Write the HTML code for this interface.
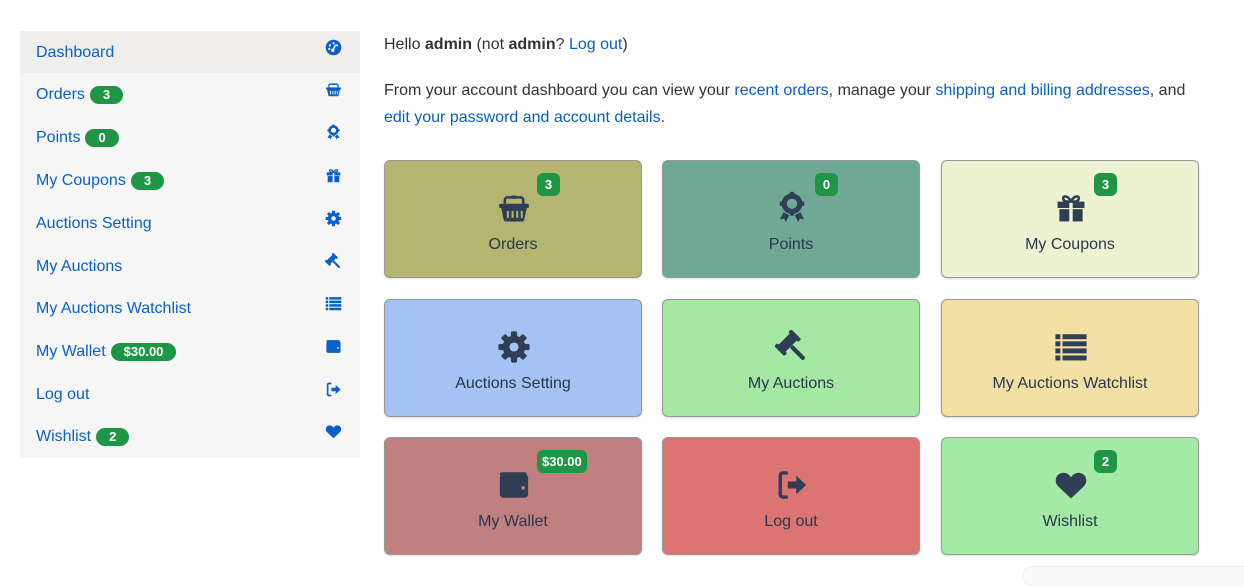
<!DOCTYPE html>
<html><head><meta charset="utf-8"><style>
*{box-sizing:border-box;margin:0;padding:0}
body{width:1244px;height:574px;background:#fff;font-family:"Liberation Sans",sans-serif;color:#333;position:relative;overflow:hidden}
a{color:#0a5fc9;text-decoration:none}
.side{position:absolute;left:20px;top:31px;width:340px;height:427px;background:#f6f6f6}
.row{position:absolute;left:0;width:340px;height:42px;display:flex;align-items:center;padding-left:16px;padding-top:1px;font-size:16px;color:#0a5fc9}
.row.act{background:#efeeec}
.row svg{position:absolute;left:305px;width:17px;height:17px;color:#0a5fc9}
.pill{display:inline-block;background:#1e9645;color:#fff;font-weight:bold;font-size:13px;border-radius:9px;height:18px;line-height:18px;padding:0 13px;margin-left:5px}
.main{position:absolute;left:384px;top:0;font-size:16px}
.p1{position:absolute;top:36px;left:0;white-space:nowrap}
.p2{position:absolute;top:77px;left:0;width:830px;line-height:27px}
.card{position:absolute;width:258px;height:118px;border:1px solid #999;border-radius:6px;box-shadow:0 1px 2px rgba(0,0,0,.15)}
.card svg{position:absolute;left:112px;top:30px;width:34px;height:34px;color:#2f3e55}
.card .lbl{position:absolute;left:0;right:0;top:75px;text-align:center;font-size:16px;color:#2a374d}
.card .b{position:absolute;top:12px;left:152px;height:23px;min-width:23px;padding:0 5px;background:#1e9645;color:#fff;font-weight:bold;font-size:13px;line-height:23px;text-align:center;border-radius:6px}
</style></head><body>
<svg width="0" height="0" style="position:absolute">
<defs>
<symbol id="dash" viewBox="0 0 24 24"><mask id="md"><rect width="24" height="24" fill="#fff"/><circle cx="12" cy="6" r="1.6" fill="#000"/><circle cx="7" cy="9" r="1.6" fill="#000"/><circle cx="17" cy="9" r="1.6" fill="#000"/><circle cx="6" cy="14" r="1.6" fill="#000"/><path d="M11 16 L15 8" stroke="#000" stroke-width="2.2"/><circle cx="11" cy="16" r="2.4" fill="#000"/></mask><circle cx="12" cy="12" r="11" fill="currentColor" mask="url(#md)"/></symbol>
<symbol id="basket" viewBox="0 0 24 24"><path d="M5.5 9V6.5a2 2 0 0 1 2-2h9a2 2 0 0 1 2 2V9" fill="none" stroke="currentColor" stroke-width="1.8"/><rect x="10" y="3.2" width="4" height="2.4" rx=".8" fill="currentColor"/><rect x="1.5" y="9" width="21" height="3" rx="1" fill="currentColor"/><path fill="currentColor" fill-rule="evenodd" d="M3 12h18l-1.7 8.2a1.6 1.6 0 0 1-1.6 1.3H6.3a1.6 1.6 0 0 1-1.6-1.3zM7 14v5h1.4v-5zM10.3 14v5h1.4v-5zM13.6 14v5H15v-5zM16.8 14v5h1.4v-5z"/></symbol>
<symbol id="award" viewBox="0 0 24 24"><mask id="ma"><rect width="24" height="24" fill="#fff"/><circle cx="12" cy="9" r="3.6" fill="#000"/></mask><g fill="currentColor"><circle cx="12" cy="9" r="7.3" mask="url(#ma)"/><g mask="url(#ma)"><rect x="10.5" y="0.6" width="3" height="3" /><rect x="10.5" y="14.4" width="3" height="3"/><rect x="3.4" y="7.5" width="3" height="3"/><rect x="17.6" y="7.5" width="3" height="3"/></g><path d="M6 15l-2.5 5 3-.5 1.2 2.5L10 17z"/><path d="M18 15l2.5 5-3-.5-1.2 2.5L14 17z"/></g></symbol>
<symbol id="gift" viewBox="0 0 24 24"><g fill="currentColor"><path d="M12 7.5C10 3 6 3 6.5 5.5S10 7.5 12 7.5zM12 7.5C14 3 18 3 17.5 5.5S14 7.5 12 7.5z" fill="none" stroke="currentColor" stroke-width="1.8"/><rect x="2.5" y="7.5" width="8.3" height="4.5"/><rect x="13.2" y="7.5" width="8.3" height="4.5"/><rect x="3.8" y="12.8" width="7" height="8.7"/><rect x="13.2" y="12.8" width="7" height="8.7"/></g></symbol>
<symbol id="gear" viewBox="0 0 24 24"><mask id="mg"><rect width="24" height="24" fill="#fff"/><circle cx="12" cy="12" r="3.2" fill="#000"/></mask><g fill="currentColor" mask="url(#mg)"><circle cx="12" cy="12" r="8"/><g><rect x="9.8" y="1" width="4.4" height="22" rx="1"/><rect x="9.8" y="1" width="4.4" height="22" rx="1" transform="rotate(45 12 12)"/><rect x="9.8" y="1" width="4.4" height="22" rx="1" transform="rotate(90 12 12)"/><rect x="9.8" y="1" width="4.4" height="22" rx="1" transform="rotate(135 12 12)"/></g></g></symbol>
<symbol id="gavel" viewBox="0 0 24 24"><g fill="currentColor" transform="rotate(-45 10 10)"><rect x="3" y="5" width="14" height="7" rx="1"/><rect x="1.5" y="3.5" width="3" height="10" rx="1"/><rect x="15.5" y="3.5" width="3" height="10" rx="1"/><rect x="8.5" y="12" width="3" height="13" rx="1.2"/></g></symbol>
<symbol id="list" viewBox="0 0 24 24"><g fill="currentColor"><rect x="1" y="3" width="3.5" height="3.5"/><rect x="6" y="3" width="17" height="3.5"/><rect x="1" y="8" width="3.5" height="3.5"/><rect x="6" y="8" width="17" height="3.5"/><rect x="1" y="13" width="3.5" height="3.5"/><rect x="6" y="13" width="17" height="3.5"/><rect x="1" y="18" width="3.5" height="3.5"/><rect x="6" y="18" width="17" height="3.5"/></g></symbol>
<symbol id="wallet" viewBox="0 0 24 24"><mask id="mw"><rect width="24" height="24" fill="#fff"/><circle cx="18.5" cy="14" r="1.3" fill="#000"/></mask><g fill="currentColor" mask="url(#mw)"><rect x="2" y="3" width="19" height="3" rx="1.5"/><rect x="2" y="4.5" width="20" height="16.5" rx="2.5"/></g></symbol>
<symbol id="logout" viewBox="0 0 24 24"><path d="M8 3.5H5.5a1.8 1.8 0 0 0-1.8 1.8v13.4a1.8 1.8 0 0 0 1.8 1.8H8" fill="none" stroke="currentColor" stroke-width="2.4" stroke-linecap="round"/><path fill="currentColor" d="M9 9.5h6V5.5l7 6.5-7 6.5v-4H9z"/></symbol>
<symbol id="heart" viewBox="0 0 24 24"><path fill="currentColor" d="M12 21.5L3 13C0 10 0.8 4.5 5.5 3.5c2.8-.6 5 1 6.5 3 1.5-2 3.7-3.6 6.5-3C23.2 4.5 24 10 21 13z"/></symbol>
</defs></svg>

<div class="side">
<div class="row act" style="top:0"><a>Dashboard</a><svg style="top:8px"><use href="#dash"/></svg></div>
<div class="row" style="top:42px"><a>Orders</a><span class="pill">3</span><svg style="top:8px"><use href="#basket"/></svg></div>
<div class="row" style="top:85px"><a>Points</a><span class="pill">0</span><svg style="top:8px"><use href="#award"/></svg></div>
<div class="row" style="top:128px"><a>My Coupons</a><span class="pill">3</span><svg style="top:8px"><use href="#gift"/></svg></div>
<div class="row" style="top:171px"><a>Auctions Setting</a><svg style="top:8px"><use href="#gear"/></svg></div>
<div class="row" style="top:214px"><a>My Auctions</a><svg style="top:8px"><use href="#gavel"/></svg></div>
<div class="row" style="top:256px"><a>My Auctions Watchlist</a><svg style="top:8px"><use href="#list"/></svg></div>
<div class="row" style="top:299px"><a>My Wallet</a><span class="pill">$30.00</span><svg style="top:8px"><use href="#wallet"/></svg></div>
<div class="row" style="top:342px"><a>Log out</a><svg style="top:8px"><use href="#logout"/></svg></div>
<div class="row" style="top:384px"><a>Wishlist</a><span class="pill">2</span><svg style="top:8px"><use href="#heart"/></svg></div>
</div>

<div class="main">
<div class="p1">Hello <b>admin</b> (not <b>admin</b>? <a>Log out</a>)</div>
<div class="p2">From your account dashboard you can view your <a>recent orders</a>, manage your <a>shipping and billing addresses</a>, and<br><a>edit your password and account details</a>.</div>
</div>

<div class="card" style="left:384px;top:160px;background:#b3b570"><svg><use href="#basket"/></svg><span class="b">3</span><div class="lbl">Orders</div></div>
<div class="card" style="left:662px;top:160px;background:#6fa894"><svg><use href="#award"/></svg><span class="b">0</span><div class="lbl">Points</div></div>
<div class="card" style="left:941px;top:160px;background:#edf2d3"><svg><use href="#gift"/></svg><span class="b">3</span><div class="lbl">My Coupons</div></div>
<div class="card" style="left:384px;top:299px;background:#a3c4f3"><svg><use href="#gear"/></svg><div class="lbl">Auctions Setting</div></div>
<div class="card" style="left:662px;top:299px;background:#a4e8a4"><svg><use href="#gavel"/></svg><div class="lbl">My Auctions</div></div>
<div class="card" style="left:941px;top:299px;background:#f3e0a5"><svg><use href="#list"/></svg><div class="lbl">My Auctions Watchlist</div></div>
<div class="card" style="left:384px;top:437px;background:#c18080"><svg><use href="#wallet"/></svg><span class="b">$30.00</span><div class="lbl">My Wallet</div></div>
<div class="card" style="left:662px;top:437px;background:#dc7472"><svg><use href="#logout"/></svg><div class="lbl">Log out</div></div>
<div class="card" style="left:941px;top:437px;background:#a4e9a6"><svg><use href="#heart"/></svg><span class="b">2</span><div class="lbl">Wishlist</div></div>
<div style="position:absolute;left:1022px;top:566px;width:240px;height:20px;border:1px solid #eee;border-radius:10px;background:#fafafa"></div>
</body></html>
